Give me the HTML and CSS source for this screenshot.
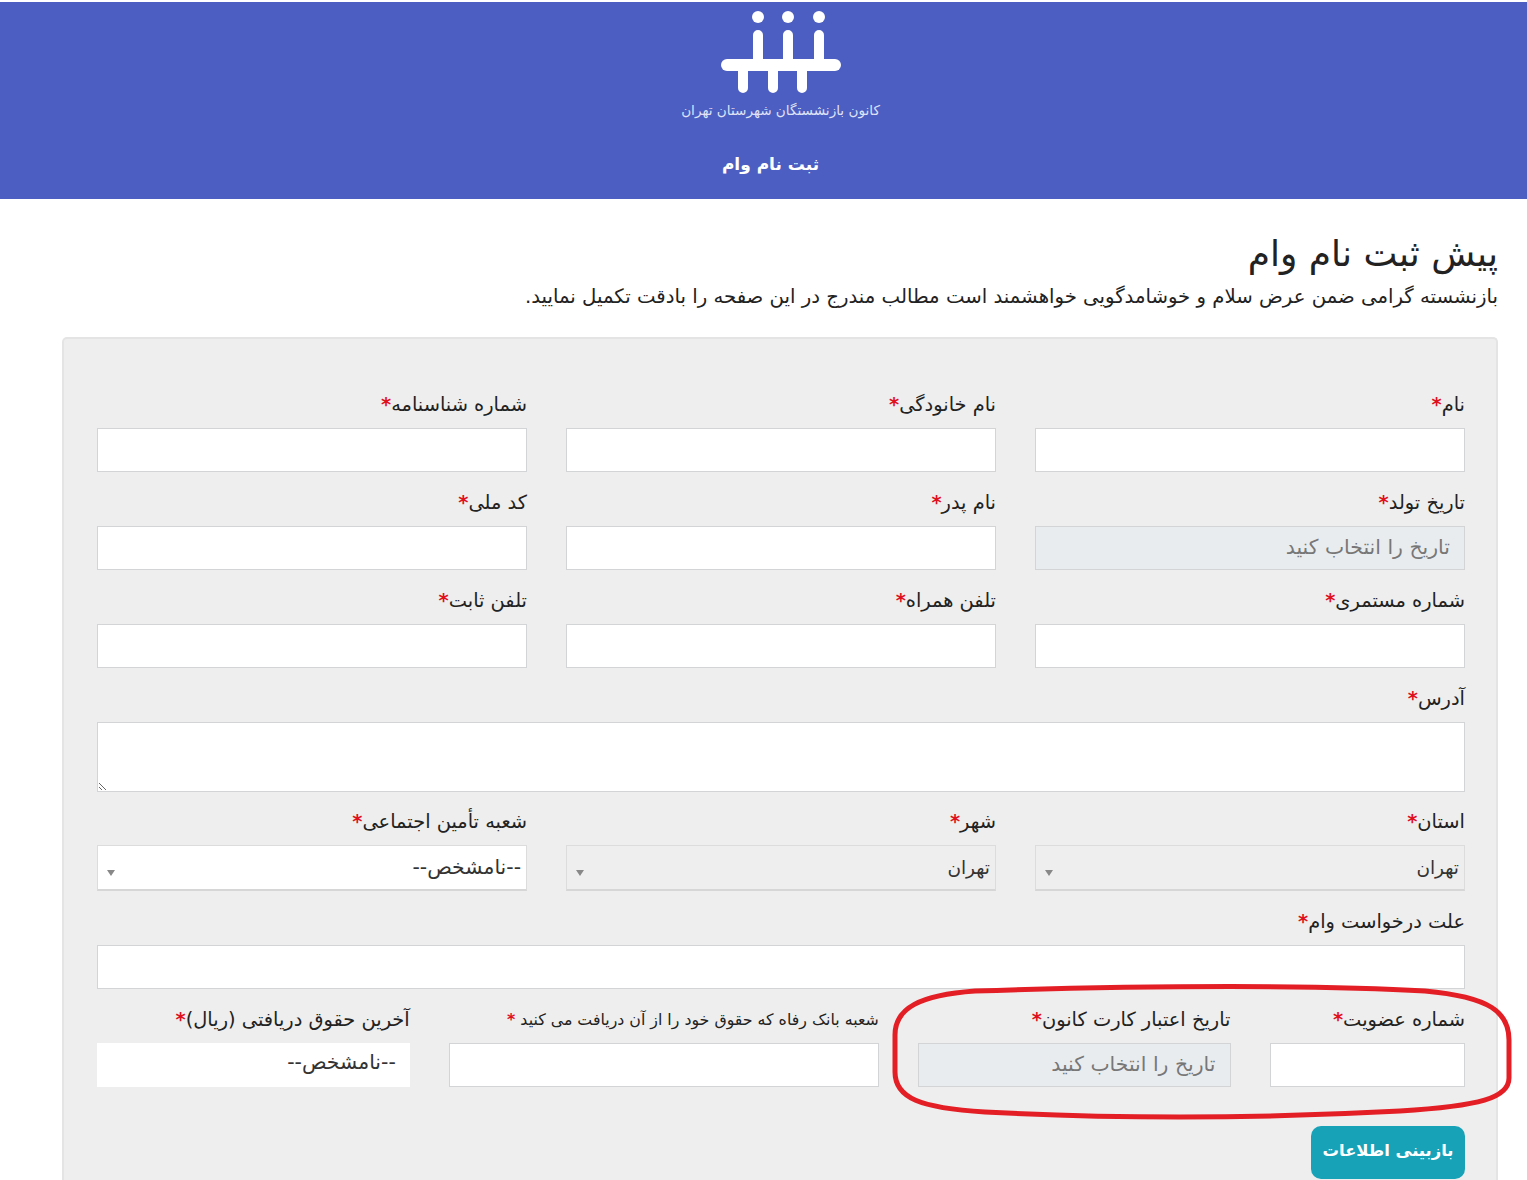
FILE: index.html
```html
<!DOCTYPE html>
<html lang="fa" dir="rtl">
<head>
    <meta charset="UTF-8">
    <title>پیش ثبت نام وام</title>
    <link rel="stylesheet" href="styles.css">
</head>
<body>

<!-- Header -->
<header class="top-bar">
    <svg class="logo" width="120" height="84" viewBox="0 0 120 84" fill="none" stroke="#fff" stroke-width="10" stroke-linecap="round">
        <circle cx="37" cy="6" r="6" fill="#fff" stroke="none"/>
        <circle cx="67" cy="6" r="6" fill="#fff" stroke="none"/>
        <circle cx="98" cy="6" r="6" fill="#fff" stroke="none"/>
        <path d="M37 24V54M67 24V54M98 24V54"/>
        <path d="M6 54H114" stroke-width="12"/>
        <path d="M22 54V77M52 54V77M81 54V77"/>
    </svg>
    <p class="org-name">کانون بازنشستگان شهرستان تهران</p>
    <p class="page-name">ثبت نام وام</p>
</header>

<main class="content">
    <h1 class="title">پیش ثبت نام وام</h1>
    <p class="intro">بازنشسته گرامی ضمن عرض سلام و خوشامدگویی خواهشمند است مطالب مندرج در این صفحه را بادقت تکمیل نمایید.</p>

    <!-- Form -->
    <form class="panel">
        <div class="form-grid">
            <div class="field span-4"><label>نام<span class="req">*</span></label><input type="text"></div>
            <div class="field span-4"><label>نام خانودگی<span class="req">*</span></label><input type="text"></div>
            <div class="field span-4"><label>شماره شناسنامه<span class="req">*</span></label><input type="text"></div>

            <div class="field span-4"><label>تاریخ تولد<span class="req">*</span></label><input type="text" class="locked" placeholder="تاریخ را انتخاب کنید" readonly></div>
            <div class="field span-4"><label>نام پدر<span class="req">*</span></label><input type="text"></div>
            <div class="field span-4"><label>کد ملی<span class="req">*</span></label><input type="text"></div>

            <div class="field span-4"><label>شماره مستمری<span class="req">*</span></label><input type="text"></div>
            <div class="field span-4"><label>تلفن همراه<span class="req">*</span></label><input type="text"></div>
            <div class="field span-4"><label>تلفن ثابت<span class="req">*</span></label><input type="text"></div>

            <div class="field span-12"><label>آدرس<span class="req">*</span></label><textarea></textarea></div>

            <div class="field span-4"><label>استان<span class="req">*</span></label><div class="select-box locked">تهران</div></div>
            <div class="field span-4"><label>شهر<span class="req">*</span></label><div class="select-box locked">تهران</div></div>
            <div class="field span-4"><label>شعبه تأمین اجتماعی<span class="req">*</span></label><div class="select-box">--نامشخص--</div></div>

            <div class="field span-12"><label>علت درخواست وام<span class="req">*</span></label><input type="text"></div>

            <div class="field span-2"><label>شماره عضویت<span class="req">*</span></label><input type="text"></div>
            <div class="field span-3"><label>تاریخ اعتبار کارت کانون<span class="req">*</span></label><input type="text" class="locked" placeholder="تاریخ را انتخاب کنید" readonly></div>
            <div class="field span-4"><label class="small-label">شعبه بانک رفاه که حقوق خود را از آن دریافت می کنید <span class="req">*</span></label><input type="text"></div>
            <div class="field span-3"><label>آخرین حقوق دریافتی (ریال)<span class="req">*</span></label><div class="plain-box">--نامشخص--</div></div>
        </div>
        <button type="button" class="btn-review">بازبینی اطلاعات</button>
    </form>
</main>

<!-- Red hand drawn mark -->
<svg class="mark" width="1527" height="1180" viewBox="0 0 1527 1180" fill="none">
    <path d="M975 991C1150 985 1330 985 1425 991C1490 997 1509 1012 1509 1040V1078C1509 1098 1480 1106 1400 1111C1250 1119 1100 1118 985 1112C920 1108 895 1098 895 1072V1035C895 1008 920 995 975 991Z" stroke="#e31e25" stroke-width="5"/>
</svg>

</body>
</html>
```

FILE: styles.css
```css
* {
    margin: 0;
    padding: 0;
    box-sizing: border-box;
}

html, body {
    height: 1180px;
    overflow: hidden;
}

body {
    background: #fff;
    color: #222;
    font-family: "DejaVu Sans", sans-serif;
    padding-top: 2px;
    position: relative;
}

/* Header */
.top-bar {
    height: 197px;
    background: #4c5ec1;
    color: #fff;
    display: flex;
    flex-direction: column;
    align-items: center;
    padding-top: 9px;
    padding-left: 34px;
}

.logo {
    display: block;
}

.org-name {
    font-size: 13.6px;
    line-height: 20px;
    margin-top: 5px;
    color: #dfe3f7;
}

.page-name {
    font-size: 17px;
    font-weight: bold;
    line-height: 28px;
    margin-top: 30px;
    margin-right: 20px;
}

/* Page content */
.content {
    padding: 33px 29px 0 29px;
}

.title {
    font-size: 36px;
    font-weight: normal;
    line-height: 44px;
}

.intro {
    font-size: 19.7px;
    line-height: 28px;
    margin-top: 7px;
}

/* Form panel */
.panel {
    margin: 26px 0 0 33px;
    padding: 53px 31px 0 33px;
    background: #eee;
    border: 2px solid #e4e4e4;
    border-bottom: none;
    border-radius: 5px 5px 0 0;
    height: 860px;
}

.form-grid {
    display: grid;
    grid-template-columns: repeat(12, 1fr);
    column-gap: 39px;
}

.span-2 { grid-column: span 2; }
.span-3 { grid-column: span 3; }
.span-4 { grid-column: span 4; }
.span-12 { grid-column: span 12; }

.field {
    margin-bottom: 18px;
}

.field label {
    display: block;
    font-size: 19.4px;
    line-height: 26px;
    height: 36px;
}

.field label.small-label {
    font-size: 15.8px;
}

.req {
    color: #e0101c;
    font-weight: bold;
}

.field input,
.field textarea,
.select-box,
.plain-box {
    display: block;
    width: 100%;
    height: 44px;
    background: #fff;
    border: 1px solid #d2d4d6;
    font-family: inherit;
    font-size: 20.4px;
    color: #333;
    padding: 0 14px;
    outline: none;
}

.field input {
    padding-bottom: 3px;
}

.field textarea {
    height: 70px;
    margin-bottom: -1px;
}

.field input.locked {
    background: #e9ecef;
}

.field input::placeholder {
    color: #777;
    opacity: 1;
}

.select-box {
    height: 46px;
    line-height: 42px;
    padding: 0 5px;
    position: relative;
    border-color: #dcdcdc;
    border-bottom: 2px solid #d6d6d6;
}

.select-box.locked {
    background: #eee;
    font-size: 18.5px;
    line-height: 44px;
}

.select-box::after {
    content: "";
    position: absolute;
    left: 9px;
    top: 24px;
    border-top: 6px solid #888;
    border-left: 4px solid transparent;
    border-right: 4px solid transparent;
}

.plain-box {
    border: none;
    line-height: 38px;
}

.btn-review {
    display: block;
    width: 154px;
    height: 53px;
    background: #17a2b8;
    color: #fff;
    border: none;
    border-radius: 10px;
    font-family: inherit;
    font-size: 16.4px;
    font-weight: bold;
    margin-top: 21px;
    padding-bottom: 4px;
}

/* Annotation on top of the form */
.mark {
    position: absolute;
    top: 0;
    left: 0;
    pointer-events: none;
}
```
